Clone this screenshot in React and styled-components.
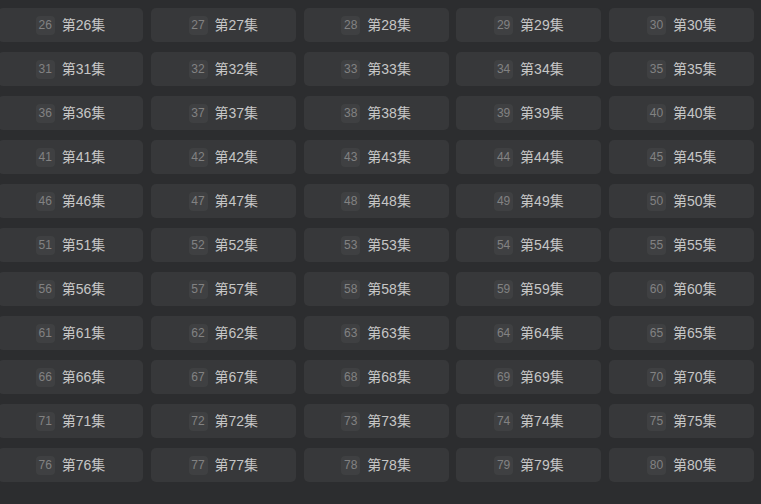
import React from "react";
import styled, { createGlobalStyle } from "styled-components";

const GlobalStyle = createGlobalStyle`
  html, body {
    margin: 0;
    padding: 0;
    background: #2c2d2f;
    overflow: hidden;
  }
  body {
    font-family: "Liberation Sans", "Noto Sans CJK SC", sans-serif;
  }
`;

const Page = styled.div`
  width: 761px;
  height: 504px;
  overflow: hidden;
  background: #2c2d2f;
`;

const EpisodeGrid = styled.div`
  display: grid;
  grid-template-columns: repeat(5, 145px);
  grid-auto-rows: 34px;
  column-gap: 7.8px;
  row-gap: 10px;
  padding-top: 8px;
  margin-left: -2px;
`;

const EpisodeCard = styled.div`
  display: flex;
  align-items: center;
  justify-content: center;
  gap: 7px;
  background: #37383a;
  border-radius: 5px;
  cursor: pointer;
`;

const NumBadge = styled.span`
  display: inline-flex;
  align-items: center;
  justify-content: center;
  min-width: 19px;
  height: 19px;
  padding: 0 1px;
  box-sizing: border-box;
  background: #3f4042;
  color: #828282;
  border-radius: 4px;
  font-family: "Liberation Sans", Arial, sans-serif;
  font-size: 12px;
  line-height: 1;
`;

const Title = styled.span`
  color: #c6c6c6;
  font-family: "Liberation Sans", "Noto Sans CJK SC", sans-serif;
  font-size: 14px;
  line-height: 1;
  margin-top: -1px;
`;

const episodes = Array.from({ length: 55 }, (_, i) => i + 26);

export default function App() {
  return (
    <Page>
      <GlobalStyle />
      <EpisodeGrid>
        {episodes.map((n) => (
          <EpisodeCard key={n}>
            <NumBadge>{n}</NumBadge>
            <Title>第{n}集</Title>
          </EpisodeCard>
        ))}
      </EpisodeGrid>
    </Page>
  );
}
